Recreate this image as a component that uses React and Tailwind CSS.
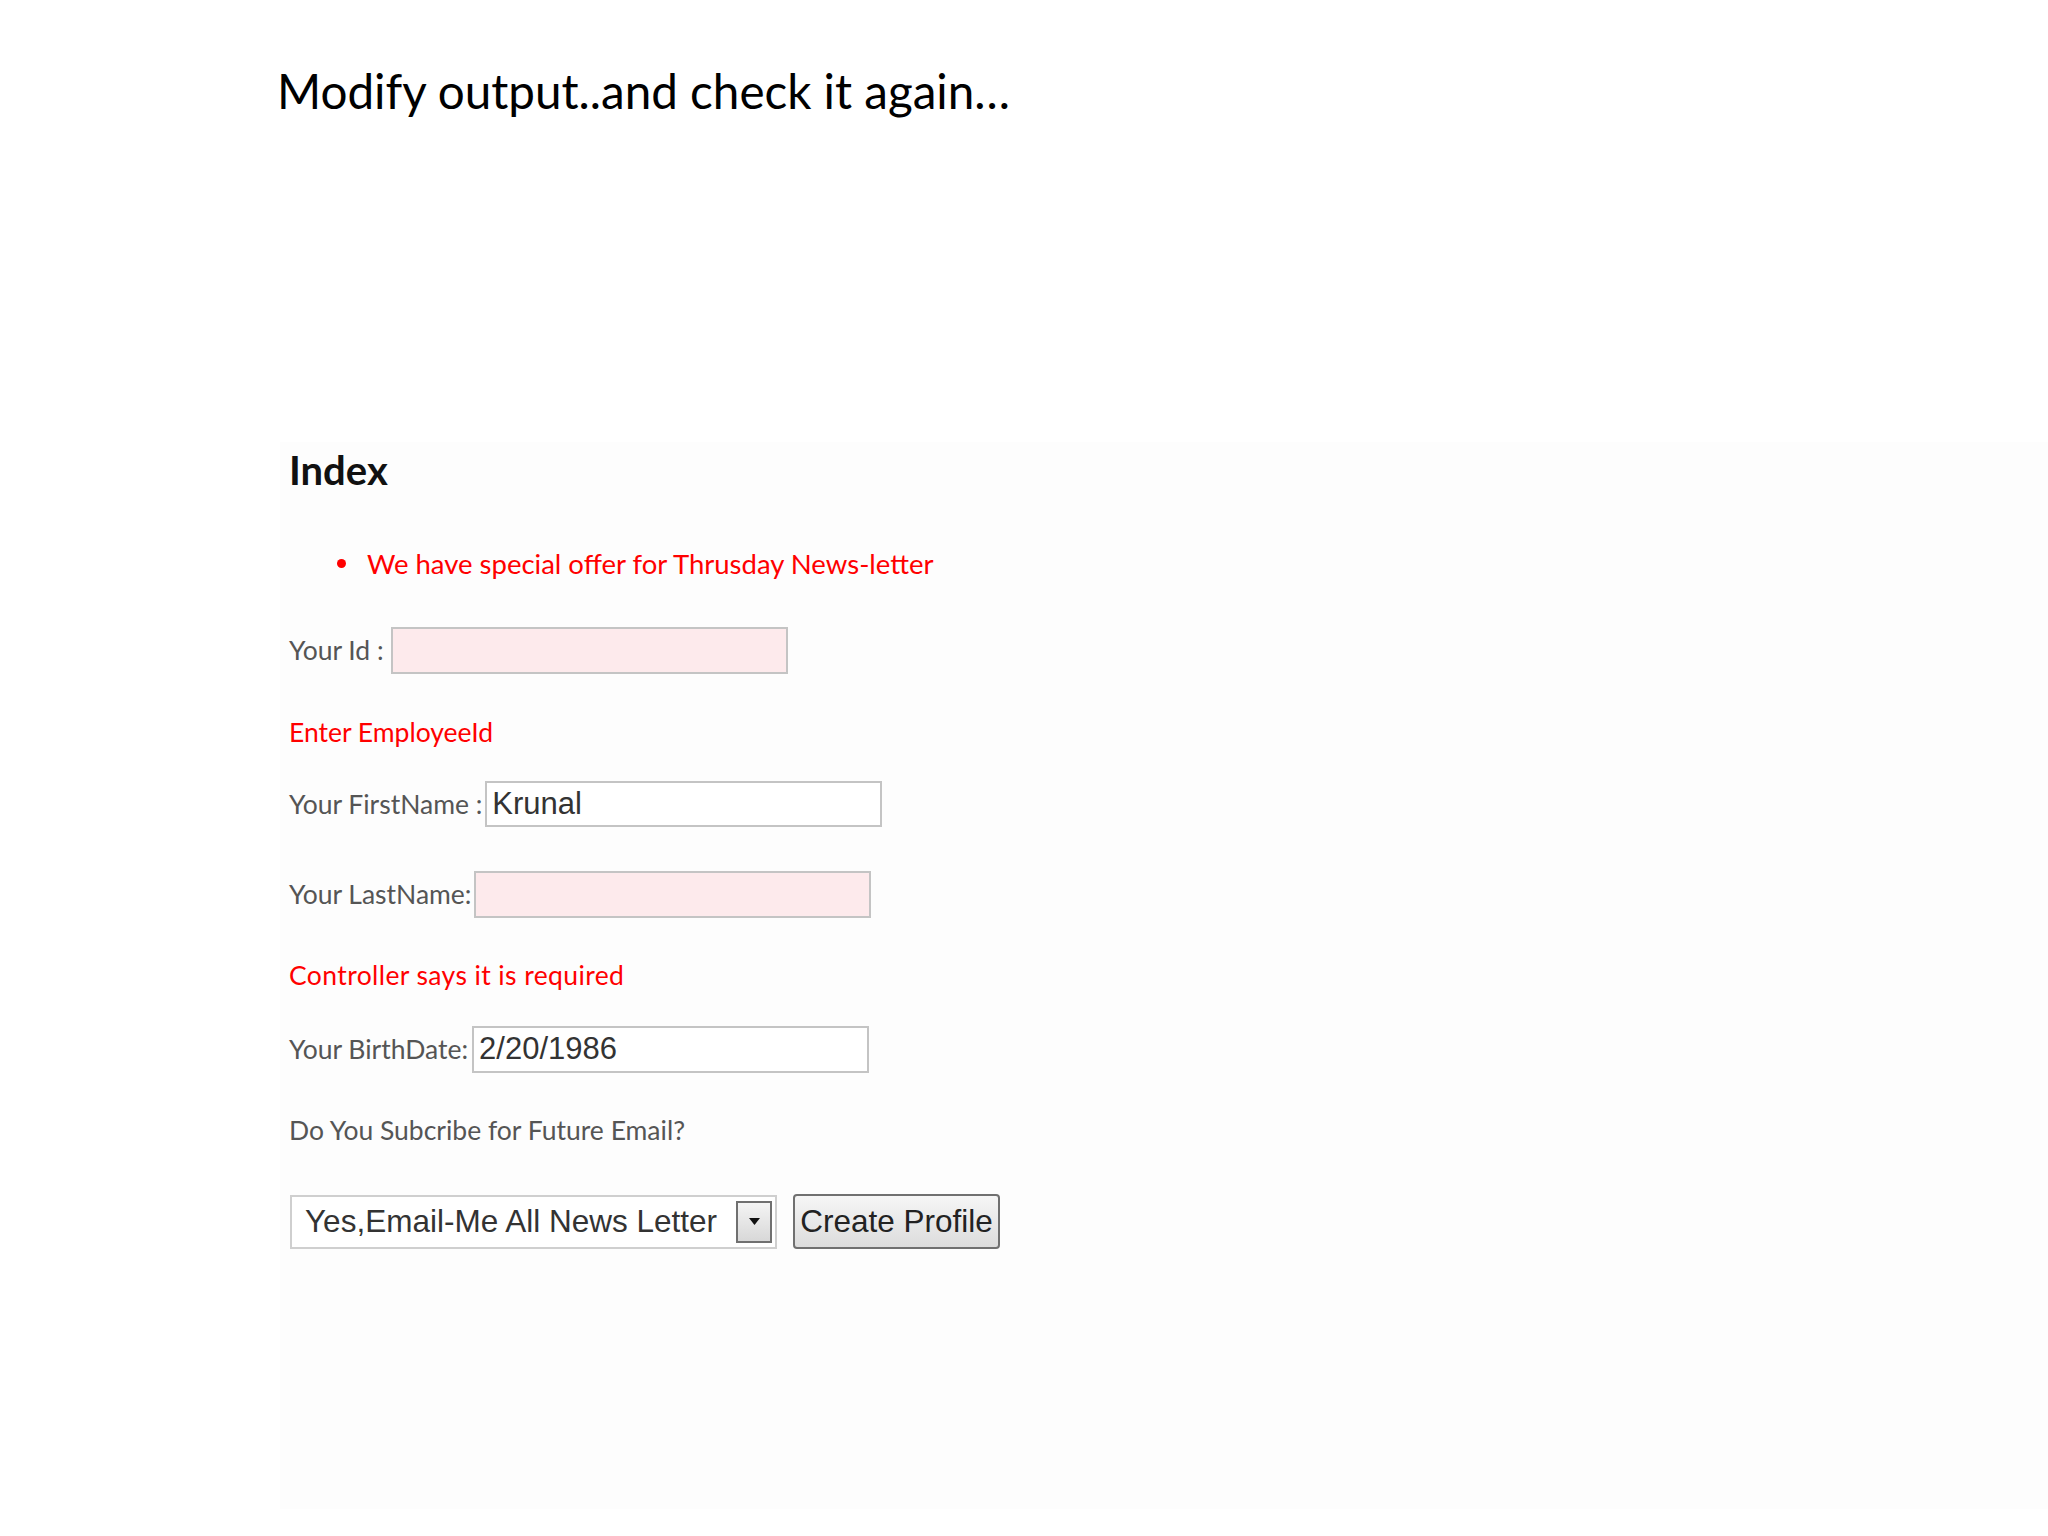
export default function App() {
  const label = "text-[#555555] text-[26.5px] leading-none";
  const err = "text-[#ff0000] text-[26.5px] leading-none";
  const arial = { fontFamily: "'Liberation Sans', Arial, sans-serif" };
  return (
    <div className="w-[2048px] h-[1536px] bg-white relative overflow-hidden" style={{ fontFamily: "Lato, 'Noto Sans', sans-serif" }}>
      <div className="pl-[277px] pt-[63px] text-[47.6px] leading-[56px] text-black">
        Modify output..and check it again…
      </div>
      <div className="ml-[280px] mt-[323px] pl-[9px] bg-[#fdfdfd] pb-[260px]">
        <div className="pt-[8px] text-[40px] font-bold leading-none text-[#111]">Index</div>
        <ul className="mt-[60px] pl-[48px]">
          <li className="flex items-center gap-[21px] text-[#ff0000] text-[27.5px] leading-none">
            <span className="w-[9px] h-[9px] rounded-full bg-[#ff0000]" />
            <span>We have special offer for Thrusday News-letter</span>
          </li>
        </ul>
        <div className="mt-[49px] flex items-center">
          <span className={label}>Your Id :</span>
          <div className="ml-[7px] w-[397px] h-[47px] border-2 border-[#c4c4c4] bg-[#fdeaec]" />
        </div>
        <div className={err + " mt-[45px]"}>Enter EmployeeId</div>
        <div className="mt-[36px] flex items-center">
          <span className={label}>Your FirstName :</span>
          <div className="ml-[3px] w-[397px] h-[46px] border-2 border-[#c4c4c4] bg-white flex items-center pl-[5px] text-[31px] text-[#333]" style={arial}>Krunal</div>
        </div>
        <div className="mt-[44px] flex items-center">
          <span className={label}>Your LastName:</span>
          <div className="ml-[3px] w-[397px] h-[47px] border-2 border-[#c4c4c4] bg-[#fdeaec]" />
        </div>
        <div className={err + " mt-[44px] tracking-[0.4px]"}>Controller says it is required</div>
        <div className="mt-[37px] flex items-center">
          <span className={label}>Your BirthDate:</span>
          <div className="ml-[4px] w-[397px] h-[47px] border-2 border-[#c4c4c4] bg-white flex items-center pl-[5px] text-[31px] text-[#333]" style={arial}>2/20/1986</div>
        </div>
        <div className={label + " mt-[44px]"}>Do You Subcribe for Future Email?</div>
        <div className="mt-[51px] flex items-center" style={arial}>
          <div className="ml-[1px] w-[487px] h-[54px] border-2 border-[#cfcfcf] bg-white flex items-center justify-between pl-[13px] pr-[3px]">
            <span className="text-[31.5px] text-[#333]">Yes,Email-Me All News Letter</span>
            <div className="w-[36px] h-[42px] border-2 border-[#707070] bg-gradient-to-b from-[#f4f4f4] to-[#d8d8d8] flex items-center justify-center">
              <svg width="11" height="7" viewBox="0 0 11 7"><path d="M0 0H11L5.5 7Z" fill="#111" /></svg>
            </div>
          </div>
          <div className="ml-[16px] w-[207px] h-[55px] rounded-[4px] border-2 border-[#707070] bg-gradient-to-b from-[#f6f6f6] to-[#dcdcdc] flex items-center justify-center text-[31.5px] text-[#222]">
            Create Profile
          </div>
        </div>
      </div>
    </div>
  );
}
